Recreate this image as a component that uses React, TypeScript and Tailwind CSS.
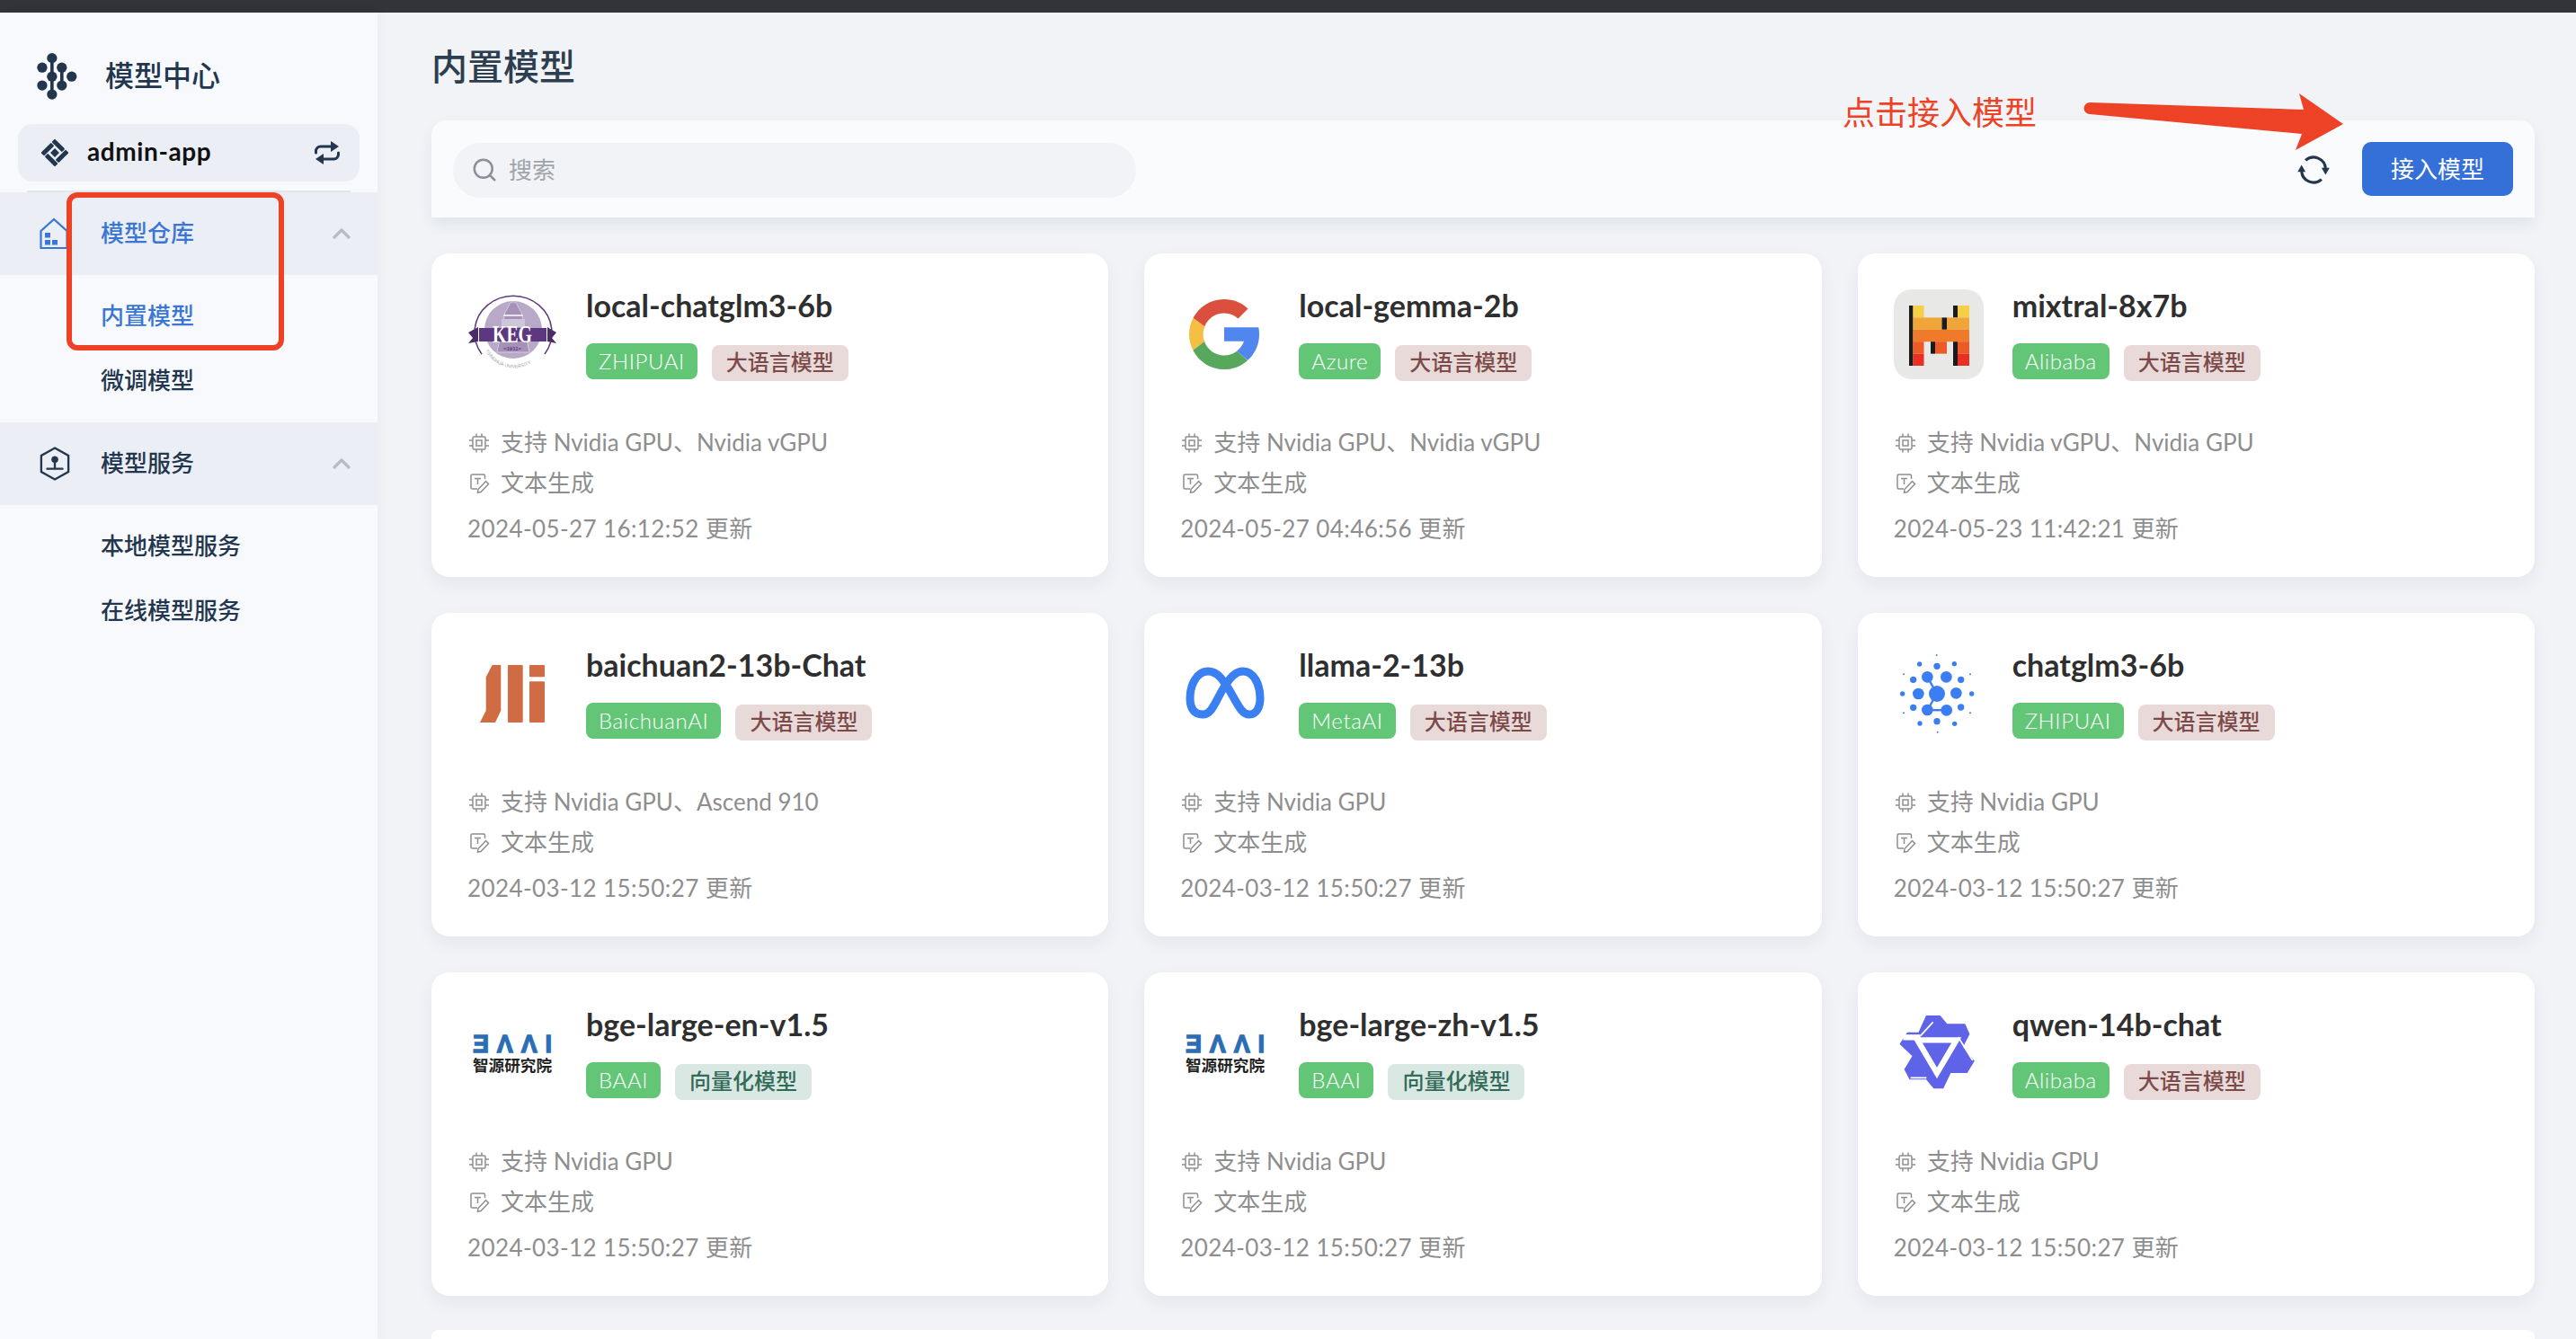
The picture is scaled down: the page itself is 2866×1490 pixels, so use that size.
import React from "react";
import { ChevronUp, Search } from "lucide-react";

interface Model {
  name: string;
  vendor: string;
  kind: string;
  support: string;
  time: string;
  logo: React.ReactNode;
}

const KegLogo = () => (
  <svg viewBox="0 0 100 100" className="w-full h-full">
    <defs>
      <path id="kegArc" d="M20 68 A36 36 0 0 0 84 68" />
    </defs>
    <path d="M16 72 A43 41 0 1 1 86 72" fill="none" stroke="#5f3a7e" strokeWidth="1.500" />
    <circle cx="51" cy="45" r="32" fill="#b9a9c8" />
    <path d="M51 14 C46 14 46 21 42 25 L33 70 L69 70 L60 25 C56 21 56 14 51 14 Z" fill="#a692b8" stroke="#d6cde0" strokeWidth="1" />
    <rect x="40" y="28" width="22" height="2" fill="#e8e2ee" />
    <rect x="38" y="33" width="26" height="9" fill="#cfc5da" />
    <polygon points="1,48 12,42 12,58 1,60 6,54" fill="#4a2c68" />
    <polygon points="99,48 89,42 89,58 99,60 94,54" fill="#4a2c68" />
    <rect x="13" y="43" width="75" height="15" fill="#5e3781" />
    <text x="50" y="59" textAnchor="middle" fill="#fff" fontSize="27" fontWeight="700" textLength="44" lengthAdjust="spacingAndGlyphs" fontFamily="Liberation Serif, serif">KEG</text>
    <text x="50" y="68" textAnchor="middle" fill="#5e3781" fontSize="6" fontWeight="700" fontFamily="Liberation Sans, sans-serif">=1911=</text>
    <text fill="#a79bb3" fontSize="5.200" fontFamily="Liberation Sans, sans-serif">
      <textPath href="#kegArc">TSINGHUA UNIVERSITY</textPath>
    </text>
  </svg>
);

const GoogleLogo = () => (
  <svg viewBox="0 0 100 100" className="w-full h-full">
    <g transform="translate(2.2 3.2) scale(1.95)">
      <path fill="#f4bf42" d="M4 24c0 3.3.8 6.4 2.2 9.1l6.5-5C12.3 26.8 12 25.4 12 24s.3-2.9.9-4.5l-6.6-4.8C4.8 17.5 4 20.6 4 24z" />
      <path fill="#db4f3f" d="M6.306 14.691l6.571 4.819C14.655 15.108 18.961 12 24 12c3.059 0 5.842 1.154 7.961 3.039l5.657-5.657C34.046 6.053 29.268 4 24 4 16.318 4 9.656 8.337 6.306 14.691z" />
      <path fill="#57a75c" d="M24 44c5.166 0 9.86-1.977 13.409-5.192l-6.19-5.238A11.91 11.91 0 0124 36c-5.202 0-9.619-3.317-11.283-7.946l-6.522 5.025C9.505 39.556 16.227 44 24 44z" />
      <path fill="#5086ed" d="M43.611 20.083H42V20H24v8h11.303a12.04 12.04 0 01-4.087 5.571l.003-.002 6.19 5.238C36.971 39.205 44 34 44 24c0-1.341-.138-2.65-.389-3.917z" />
    </g>
  </svg>
);

const MistralLogo = () => (
  <div className="w-full h-full rounded-[20px] bg-[#e8e8e6]">
    <svg viewBox="0 0 100 100" className="w-full h-full">
      <rect x="17" y="18" width="4.5" height="67" fill="#1b1b1b" />
      <rect x="21.5" y="18" width="12" height="13.4" fill="#f7cf45" />
      <rect x="71" y="18" width="13" height="13.4" fill="#f7cf45" />
      <rect x="66" y="18" width="5" height="13.4" fill="#1b1b1b" />
      <rect x="21.5" y="31.4" width="32" height="13.4" fill="#efa538" />
      <rect x="53.5" y="31.4" width="5.5" height="13.4" fill="#1b1b1b" />
      <rect x="59" y="31.4" width="25" height="13.4" fill="#efa538" />
      <rect x="21.5" y="44.8" width="62.5" height="13.4" fill="#ef7b2a" />
      <rect x="21.5" y="58.2" width="12" height="13.4" fill="#ee5a25" />
      <rect x="41" y="58.2" width="5" height="13.4" fill="#1b1b1b" />
      <rect x="46" y="58.2" width="13" height="13.4" fill="#ee5a25" />
      <rect x="66" y="58.2" width="5" height="26.8" fill="#1b1b1b" />
      <rect x="71" y="58.2" width="13" height="13.4" fill="#ee5a25" />
      <rect x="21.5" y="71.6" width="12" height="13.4" fill="#ea2f23" />
      <rect x="71" y="71.6" width="13" height="13.4" fill="#ea2f23" />
    </svg>
  </div>
);

const BaichuanLogo = () => (
  <svg viewBox="0 0 100 100" className="w-full h-full" fill="#d06c44">
    <polygon points="27.7,18 37.3,18 37.3,68.7 31,82 14,82 20.7,68.7 20.7,31.3" />
    <rect x="45" y="18" width="16.7" height="64" rx="1" />
    <rect x="69" y="18" width="17" height="13.3" rx="1" />
    <rect x="69" y="36.3" width="17" height="45.7" rx="1" />
  </svg>
);

const MetaLogo = () => (
  <svg viewBox="0 0 100 100" className="w-full h-full">
    <path
      d="M31 25 C41 25 47 33 56 48 C65 64 69 73 77 73 C85 73 89 65 89 55 C89 40 82 25 70 25 C62 25 56 31 48 44 C38 61 35 73 25 73 C16 73 11 67 11 55 C11 41 18 25 31 25 Z"
      fill="none"
      stroke="#3a80f2"
      strokeWidth="9"
    />
  </svg>
);

const glmDots = [
  [225, 186, 27], [163, 186, 19], [289, 184, 19], [193, 130, 19], [256, 130, 19], [193, 240, 19], [257, 241, 19],
  [225, 94, 11], [225, 278, 11], [146, 139, 11], [146, 232, 11], [305, 139, 11], [305, 231, 11],
  [167, 87, 8], [283, 86, 8], [168, 285, 8], [284, 286, 8], [110, 186, 8], [341, 186, 8],
  [224, 57, 3], [227, 314, 3], [114, 121, 3], [336, 121, 3], [114, 250, 3], [336, 250, 3],
];

const GlmLogo = () => (
  <svg viewBox="81 36 300 300" className="w-full h-full" fill="#3a7ef2">
    {glmDots.map(([x, y, r], i) => (
      <circle key={i} cx={x} cy={y} r={r} />
    ))}
    <path d="M193 130 L225 186 L193 240 L257 241" fill="none" stroke="#3a7ef2" strokeWidth="7" />
  </svg>
);

const BaaiLogo = () => (
  <svg viewBox="0 0 100 100" className="w-full h-full">
    <text x="6" y="49" fontSize="27" fontWeight="700" fill="#2c6eb5" stroke="#2c6eb5" strokeWidth="1.300" textLength="88" lengthAdjust="spacing" fontFamily="Liberation Sans, sans-serif">ƎΛΛI</text>
    <text x="6" y="70" fontSize="17.6" fontWeight="700" fill="#222" fontFamily="Noto Sans CJK SC, sans-serif">智源研究院</text>
  </svg>
);

const QwenLogo = () => (
  <svg viewBox="81 36 300 300" className="w-full h-full">
    <polygon
      points="190,62 235,62 258,90 318,90 332,122 310,165 348,212 325,250 270,250 245,302 215,302 190,272 135,272 118,240 145,195 103,155 127,118 165,118"
      fill="#5f63e8"
      stroke="#5f63e8"
      strokeWidth="4"
      strokeLinejoin="round"
    />
    <polygon points="160,142 290,142 225,252" fill="#5f63e8" stroke="#fff" strokeWidth="19" strokeLinejoin="miter" />
    <path d="M212 82L170 128M296 132L344 210M137 268H190" fill="none" stroke="#fff" strokeWidth="5" />
    <path d="M112 133H170" fill="none" stroke="#fff" strokeWidth="19" />
  </svg>
);

const ChipIcon = () => (
  <svg viewBox="0 0 24 24" className="w-6 h-6 shrink-0" fill="none" stroke="#8e8e8e" strokeWidth="1.500">
    <rect x="5" y="5" width="14" height="14" rx="1.5" />
    <rect x="9" y="9" width="6" height="6" />
    <path d="M9 1.500V5M15 1.500V5M9 19v3.500M15 19v3.500M1 9h4M1 15h4M19 9h4M19 15h4" />
  </svg>
);

const TextPenIcon = () => (
  <svg viewBox="0 0 24 24" className="w-6 h-6 shrink-0" fill="none" stroke="#8e8e8e" strokeWidth="1.500">
    <path d="M10 18H4.500A1.500 1.500 0 0 1 3 16.500V3.500A1.500 1.500 0 0 1 4.500 2H17a1.500 1.500 0 0 1 1.500 1.500V7" />
    <path d="M7 6.500h7M10.500 6.500V13" />
    <path d="M19.500 9.500l3 3-8.500 9-3.500.5.500-3.500z" />
  </svg>
);

const AppLogo = () => (
  <svg viewBox="30 20 140 160" className="w-[47px] h-[53px] shrink-0" fill="#22364d" stroke="#22364d">
    <path d="M83 40V162M116 72V132" fill="none" strokeWidth="11" />
    {[[83, 40], [50, 72], [116, 72], [83, 102], [149, 102], [50, 132], [116, 132], [83, 162]].map(([x, y], i) => (
      <circle key={i} cx={x} cy={y} r="17" stroke="none" />
    ))}
  </svg>
);

const DiamondIcon = () => (
  <svg viewBox="-16 -16 32 32" className="w-8 h-8 shrink-0" fill="#22364d">
    <g transform="rotate(45)">
      <rect x="-11" y="-11" width="16" height="5" rx="1" />
      <rect x="6" y="-11" width="5" height="16" rx="1" />
      <rect x="-5" y="6" width="16" height="5" rx="1" />
      <rect x="-11" y="-5" width="5" height="16" rx="1" />
      <rect x="-3.500" y="-3.500" width="7" height="7" />
    </g>
  </svg>
);

const SwapIcon = () => (
  <svg viewBox="0 0 32 32" className="w-8 h-8 shrink-0" fill="#22364d" stroke="none">
    <path d="M3.500 16v-2a5 5 0 0 1 5-5H22M28.500 16v2a5 5 0 0 1-5 5H10" fill="none" stroke="#22364d" strokeWidth="3" strokeLinecap="round" />
    <polygon points="20,3 29,9 20,15" />
    <polygon points="12,17 3,23 12,29" />
  </svg>
);

const HouseIcon = () => (
  <svg viewBox="0 0 32 36" className="w-8 h-9 shrink-0" fill="none" stroke="#3a76d6" strokeWidth="2.200">
    <path d="M1.500 15L16 2l14.500 13v19H1.500z" />
    <g fill="#3a76d6" stroke="none">
      <rect x="6" y="17" width="6" height="5.500" />
      <rect x="6" y="25" width="6" height="5.500" />
      <rect x="14" y="25" width="6" height="5.500" />
    </g>
  </svg>
);

const HexIcon = () => (
  <svg viewBox="0 0 36 40" className="w-[34px] h-[38px] shrink-0" fill="none" stroke="#22364d" strokeWidth="2.500">
    <path d="M18 1.500L34 10.500V29.500L18 38.500L2 29.500V10.500Z" />
    <circle cx="18" cy="15" r="4" fill="#22364d" stroke="none" />
    <path d="M18 18V26M9 26H27" strokeLinecap="round" />
  </svg>
);

const RefreshIcon = () => (
  <svg viewBox="0 0 36 36" className="w-10 h-10 shrink-0" fill="#22364d">
    <path d="M10 8.500A12 12 0 0 1 30 17M26 27.500A12 12 0 0 1 6 19" fill="none" stroke="#22364d" strokeWidth="2.800" />
    <polygon points="26,16 34,16 30,23" />
    <polygon points="2,20 10,20 6,13" />
  </svg>
);

const models: Model[] = [
  { name: "local-chatglm3-6b", vendor: "ZHIPUAI", kind: "大语言模型", support: "支持 Nvidia GPU、Nvidia vGPU", time: "2024-05-27 16:12:52 更新", logo: <KegLogo /> },
  { name: "local-gemma-2b", vendor: "Azure", kind: "大语言模型", support: "支持 Nvidia GPU、Nvidia vGPU", time: "2024-05-27 04:46:56 更新", logo: <GoogleLogo /> },
  { name: "mixtral-8x7b", vendor: "Alibaba", kind: "大语言模型", support: "支持 Nvidia vGPU、Nvidia GPU", time: "2024-05-23 11:42:21 更新", logo: <MistralLogo /> },
  { name: "baichuan2-13b-Chat", vendor: "BaichuanAI", kind: "大语言模型", support: "支持 Nvidia GPU、Ascend 910", time: "2024-03-12 15:50:27 更新", logo: <BaichuanLogo /> },
  { name: "llama-2-13b", vendor: "MetaAI", kind: "大语言模型", support: "支持 Nvidia GPU", time: "2024-03-12 15:50:27 更新", logo: <MetaLogo /> },
  { name: "chatglm3-6b", vendor: "ZHIPUAI", kind: "大语言模型", support: "支持 Nvidia GPU", time: "2024-03-12 15:50:27 更新", logo: <GlmLogo /> },
  { name: "bge-large-en-v1.5", vendor: "BAAI", kind: "向量化模型", support: "支持 Nvidia GPU", time: "2024-03-12 15:50:27 更新", logo: <BaaiLogo /> },
  { name: "bge-large-zh-v1.5", vendor: "BAAI", kind: "向量化模型", support: "支持 Nvidia GPU", time: "2024-03-12 15:50:27 更新", logo: <BaaiLogo /> },
  { name: "qwen-14b-chat", vendor: "Alibaba", kind: "大语言模型", support: "支持 Nvidia GPU", time: "2024-03-12 15:50:27 更新", logo: <QwenLogo /> },
];

const ModelCard: React.FC<{ model: Model }> = ({ model }) => (
  <div className="h-[360px] rounded-[20px] bg-white p-10 pb-0 shadow-[0_8px_20px_rgba(30,40,70,0.06)]">
    <div className="flex gap-8">
      <div className="w-[100px] h-[100px] shrink-0">{model.logo}</div>
      <div>
        <div className="h-10 leading-9 text-[34px] font-bold text-[#2f2f2f]">{model.name}</div>
        <div className="mt-5 flex items-start gap-4">
          <span className="h-10 px-[14px] rounded-lg bg-[#63c677] text-white text-2xl leading-10 font-light tracking-[0.6px]">{model.vendor}</span>
          {model.kind === "大语言模型" ? (
            <span className="mt-[2px] h-10 px-4 rounded-lg bg-[#e9dada] text-[#7d4a4a] text-2xl leading-[38px] font-medium">{model.kind}</span>
          ) : (
            <span className="mt-[2px] h-10 px-4 rounded-lg bg-[#dae8e3] text-[#326b58] text-2xl leading-[38px] font-medium">{model.kind}</span>
          )}
        </div>
      </div>
    </div>
    <div className="mt-[46px] flex flex-col text-[26px] text-[#8e8e8e]">
      <div className="h-[45px] pl-[1px] flex items-center gap-[12px]">
        <ChipIcon />
        <span>{model.support}</span>
      </div>
      <div className="h-[45px] pl-[1px] flex items-center gap-[12px]">
        <TextPenIcon />
        <span>文本生成</span>
      </div>
      <div className="mt-2 h-10 leading-10 tracking-[0.4px]">{model.time}</div>
    </div>
  </div>
);

const NavGroup: React.FC<{ icon: React.ReactNode; title: string; active?: boolean; children: React.ReactNode }> = ({ icon, title, active, children }) => (
  <div>
    <div className="h-[92px] bg-[#ebeef5] pl-[44px] pr-[24px] flex items-center">
      <div className="w-[68px] shrink-0">{icon}</div>
      <span className={active ? "flex-1 pb-[2px] text-[26px] font-medium text-[#3a76d6]" : "flex-1 pb-[2px] text-[26px] font-medium text-[#22364d]"}>{title}</span>
      <ChevronUp size={32} strokeWidth={2.4} className="text-[#b8bbc2]" />
    </div>
    <div className="pt-[9px] pb-[11px] pl-[112px]">{children}</div>
  </div>
);

const NavItem: React.FC<{ label: string; active?: boolean }> = ({ label, active }) => (
  <div className={active ? "h-[72px] leading-[72px] text-[26px] font-medium text-[#3a76d6]" : "h-[72px] leading-[72px] text-[26px] font-medium text-[#22364d]"}>{label}</div>
);

export default function App() {
  return (
    <div className="relative w-full h-[1490px] overflow-hidden flex flex-col bg-[#f1f3f7] font-['Lato','Noto_Sans_CJK_SC',sans-serif]">
      <div className="h-[14px] shrink-0 bg-[#32343a]" />
      <div className="flex flex-1 min-h-0">
        {/* sidebar */}
        <aside className="w-[420px] shrink-0 bg-[#f7f9fd] shadow-[4px_0_14px_rgba(30,40,70,0.03)]">
          <div className="h-[124px] pt-4 pl-[40px] flex items-center gap-[30px]">
            <AppLogo />
            <span className="text-[32px] font-medium text-[#22364d]">模型中心</span>
          </div>
          <div className="mx-5 h-16 rounded-2xl bg-[#ebeef5] pl-[25px] pr-[20px] flex items-center">
            <DiamondIcon />
            <span className="ml-5 flex-1 pb-[5px] text-[28px] font-bold tracking-[0.6px] text-[#111]">admin-app</span>
            <SwapIcon />
          </div>
          <div className="mx-[30px] mt-[10px] h-[2px] bg-[#e3e5ec]" />
          <NavGroup icon={<HouseIcon />} title="模型仓库" active>
            <NavItem label="内置模型" active />
            <NavItem label="微调模型" />
          </NavGroup>
          <NavGroup icon={<HexIcon />} title="模型服务">
            <NavItem label="本地模型服务" />
            <NavItem label="在线模型服务" />
          </NavGroup>
        </aside>

        {/* content */}
        <main className="flex-1 min-w-0 pl-[60px] pr-[46px]">
          <div className="h-[120px] flex items-center text-[40px] font-medium text-[#2c3e50]">内置模型</div>
          <div className="h-[108px] rounded-t-2xl bg-[#fafbfd] pl-6 pr-6 flex items-center shadow-[0_8px_16px_rgba(30,40,70,0.07)]">
            <div className="mt-[2px] w-[760px] h-[61px] rounded-full bg-[#f1f3f7] pl-5 flex items-center gap-3 text-[26px] text-[#a0a4ab]">
              <Search size={30} strokeWidth={2} className="text-[#8b8f97]" />
              <span>搜索</span>
            </div>
            <div className="ml-auto mr-[34px] mt-[2px]">
              <RefreshIcon />
            </div>
            <button className="w-[168px] h-[60px] rounded-[10px] bg-[#356fd8] text-white text-[26px]">接入模型</button>
          </div>
          <div className="mt-10 grid grid-cols-3 gap-10">
            {models.map((m) => (
              <ModelCard key={m.name} model={m} />
            ))}
          </div>
          <div className="mt-[38px] h-20 rounded-t-lg bg-white" />
        </main>
      </div>

      {/* annotations drawn on top of the screenshot */}
      <div className="absolute left-[74px] top-[214px] w-[242px] h-[176px] rounded-xl border-[6px] border-[#ee4227]" />
      <div className="absolute left-[2050px] top-[98px] text-[36px] leading-[54px] text-[#ee4227]">点击接入模型</div>
      <svg className="absolute left-[2310px] top-[96px] w-[310px] h-[80px]" viewBox="2310 96 310 80" fill="#ee4227">
        <path d="M2325 114 L2563 122 L2558 104 L2607 138 L2554 167 L2561 149 L2325 127 A6.500 6.500 0 0 1 2325 114 Z" />
      </svg>
    </div>
  );
}
